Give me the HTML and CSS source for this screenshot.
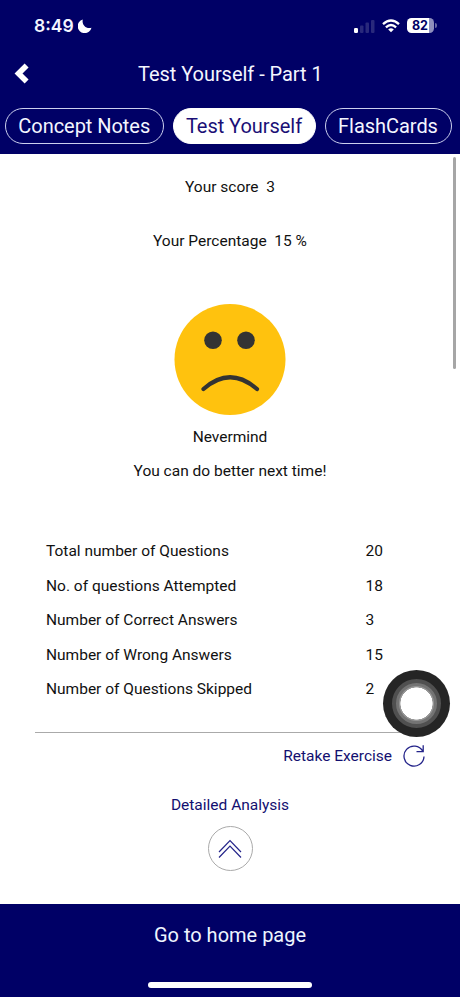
FILE: index.html
```html
<!DOCTYPE html>
<html lang="en">
<head>
<meta charset="utf-8">
<title>Test Yourself - Part 1</title>
<link rel="stylesheet" href="styles.css">
</head>
<body>
<div class="app">
  <header class="header">
    <div class="status">
      <span class="time">8:49</span>
      <svg class="moon" width="14" height="14" viewBox="0 0 14 14"><path d="M4.800.4C3.500 5.500 8 10.500 13.500 8.700A7 7 0 1 1 4.800.4Z" fill="#fff"/></svg>
      <svg class="signal" width="21" height="14" viewBox="0 0 21 14"><rect x="0" y="9" width="4" height="5" rx="1.200" fill="#fff"/><g fill="#29297c"><rect x="6" y="6.500" width="3.500" height="7.500" rx="1"/><rect x="11.500" y="3.500" width="3.500" height="10.500" rx="1"/><rect x="17" y="1" width="3.500" height="13" rx="1"/></g></svg>
      <svg class="wifi" width="18" height="14" viewBox="0 0 18 14" fill="none" stroke="#fff" stroke-width="2.300"><path d="M1 5.200Q9-2.200 17 5.200M3.900 8.300Q9 3.600 14.100 8.300"/><path d="M9 13.300 6.200 10.400Q9 8.300 11.800 10.400Z" fill="#fff" stroke="none"/></svg>
      <span class="battery"><span class="level">82</span></span>
      <i class="battery-tip"></i>
    </div>
    <div class="titlebar">
      <svg class="back" width="15" height="21" viewBox="0 0 15 21" fill="none" stroke="#fff" stroke-width="5.600"><path d="M12.600 2.400 4.500 10.500 12.600 18.600"/></svg>
      <h1>Test Yourself - Part 1</h1>
    </div>
    <nav class="tabs">
      <a class="tab t1"><span>Concept Notes</span></a>
      <a class="tab active t2"><span>Test Yourself</span></a>
      <a class="tab t3"><span>FlashCards</span></a>
    </nav>
  </header>
  <main class="content">
    <p class="score"><span>Your score&nbsp; 3</span></p>
    <p class="percent"><span>Your Percentage&nbsp; 15 %</span></p>
    <svg class="face" width="112" height="112" viewBox="0 0 112 112"><circle cx="56" cy="56.500" r="55.500" fill="#ffc20e"/><g fill="#333"><circle cx="39" cy="37.300" r="8.800"/><circle cx="72" cy="37.300" r="8.800"/></g><path d="M29.500 86Q56 62.500 83 86" fill="none" stroke="#333" stroke-width="4.200" stroke-linecap="round"/></svg>
    <p class="mood"><span>Nevermind</span></p>
    <p class="hint"><span>You can do better next time!</span></p>
    <dl class="stats">
      <dt>Total number of Questions</dt><dd>20</dd>
      <dt>No. of questions Attempted</dt><dd>18</dd>
      <dt>Number of Correct Answers</dt><dd>3</dd>
      <dt>Number of Wrong Answers</dt><dd>15</dd>
      <dt>Number of Questions Skipped</dt><dd>2</dd>
    </dl>
    <a class="retake"><span>Retake Exercise</span>
      <svg width="24" height="24" viewBox="0 0 24 24" fill="none" stroke="#24248a" stroke-width="1.300"><path d="M20.800 7.300A10 10 0 1 0 22 12.500M21.200 1.300V7.700H14.500"/></svg>
    </a>
    <p class="analysis"><span>Detailed Analysis</span></p>
    <button class="expand" aria-label="Expand"><svg width="24" height="20" viewBox="0 0 24 20" fill="none" stroke="#24248a" stroke-width="1.200"><path d="M1 13 12 1.500 23 13M1 18.500 12 7 23 18.500"/></svg></button>
    <i class="scrollbar"></i>
  </main>
  <footer class="footer"><a><span>Go to home page</span></a><i class="home"></i></footer>
  <div class="touch"><i></i></div>
</div>
</body>
</html>
```
FILE: styles.css
```css
* { box-sizing: border-box; }
body { margin: 0; background: #fff; color: #111; font: 15.5px/20px Roboto, sans-serif; }
p, h1, dl, dd { margin: 0; }
svg { display: block; flex: none; }
.app { position: relative; width: 460px; height: 997px; display: flex; flex-direction: column; overflow: hidden; }
.header { height: 154px; flex: none; background: #000066; color: #f4f6ff; }
.status { height: 50px; padding: 1px 0 0 34px; display: flex; align-items: center; }
.time { width: 40px; padding-top: 1px; font: 600 17.5px/20px Inter, sans-serif; white-space: nowrap; }
.moon { margin-left: 4px; }
.signal { margin-left: 262px; }
.wifi { margin-left: 7px; }
.battery { width: 27px; height: 15px; margin-left: 7px; border-radius: 4.5px; background: linear-gradient(90deg, #fff 22px, #8f8fbd 22px); }
.level { display: block; width: 26px; text-align: center; color: #000066; font: 700 12.5px/15px Inter, sans-serif; }
.battery-tip { width: 2px; height: 5px; margin-left: 1px; border-radius: 0 2px 2px 0; background: #6666a3; }
.titlebar { height: 48px; display: grid; grid-template-columns: 138px auto 1fr; align-items: center; }
.back { margin: 0 0 2px 14px; }
h1 { font-size: 20px; font-weight: 400; line-height: 24px; letter-spacing: -0.04px; white-space: nowrap; }
.tabs { display: flex; padding: 10px 0 0 5px; gap: 9px; }
.tab { height: 36px; display: flex; align-items: center; justify-content: center; border: 1.5px solid #ccd0ee; border-radius: 18px; font-size: 20px; line-height: 24px; letter-spacing: -0.04px; white-space: nowrap; }
.t1 { width: 158.5px; }
.t2 { width: 143px; }
.t3 { width: 127px; }
.active { background: #fff; border-color: #fff; color: #1a0f76; }
.content { position: relative; height: 749.5px; flex: none; padding-top: 23px; display: flex; flex-direction: column; align-items: center; }
.percent { margin-top: 34px; }
.face { margin-top: 52px; }
.mood { margin-top: 12px; }
.hint { margin-top: 14px; }
.stats { width: 390px; height: 200px; margin-top: 52px; padding: 8px 0 0 11px; display: grid; grid-template-columns: 319.5px 1fr; grid-auto-rows: 34.5px; border-bottom: 1px solid #aaa; }
.retake { align-self: flex-end; margin: 11px 34px 0 0; display: flex; align-items: center; gap: 10px; color: #130f70; }
.analysis { margin-top: 27px; color: #130f70; }
.expand { width: 45px; height: 45px; margin-top: 11px; padding: 0; display: flex; align-items: center; justify-content: center; background: none; border: 1.3px solid #aaa; border-radius: 50%; }
.scrollbar { position: absolute; right: 4px; top: 3px; width: 3px; height: 212px; border-radius: 2px; background: #a6a6a6; }
.footer { height: 93.5px; flex: none; padding-top: 19.5px; display: flex; flex-direction: column; align-items: center; background: #000066; color: #eef5ff; font-size: 20px; line-height: 24px; }
.home { width: 164px; height: 6px; margin-top: 35px; border-radius: 3px; background: #fff; }
.touch { position: absolute; left: 383px; top: 669.5px; width: 67px; height: 67px; padding: 9px; border-radius: 50%; background: #252525; }
.touch i { display: block; width: 49px; height: 49px; border: 4px solid #505050; border-radius: 50%; background: radial-gradient(circle, #fff 15.8px, #959595 16.3px, #959595 17px, #747474 18px); }
```
